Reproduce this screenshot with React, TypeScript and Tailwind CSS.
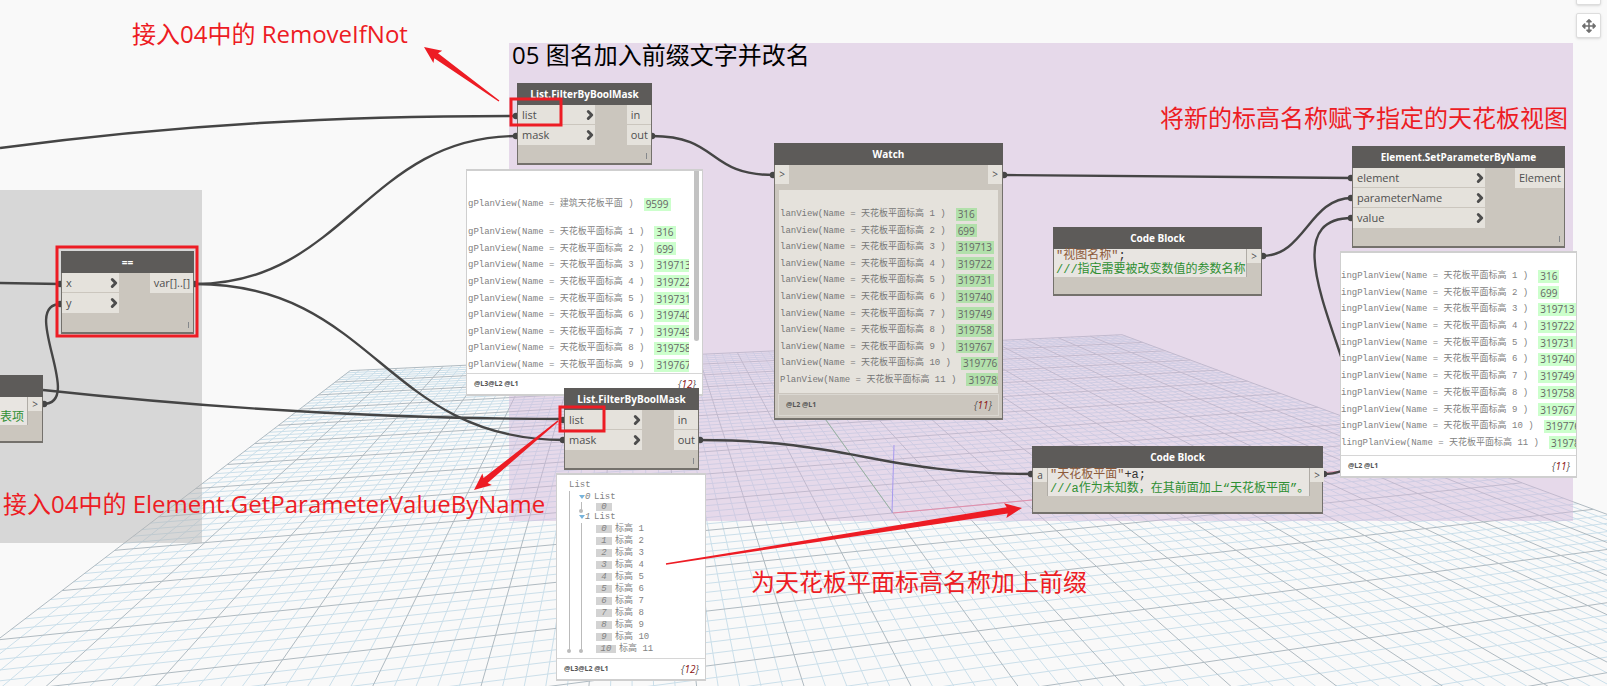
import { ChevronRight } from "lucide-react";
import { FaArrowsAlt } from "react-icons/fa";
import clsx from "clsx";
import type { ReactNode } from "react";

type Point = [number, number];

type WatchItem = { text: string; id: string };

// Ground plane: centre and the vanishing points of its two axes
const ORIGIN: Point = [893, 513];
const VANISH_X: Point = [4470, 179];
const VANISH_Y: Point = [634, 154];
const SCALE_X = 0.1885;
const SCALE_Y = 0.824;

const project = (s: number, t: number) => {
  const a = SCALE_X * s;
  const b = SCALE_Y * t;
  const w = 1 + a + b;
  const x = (ORIGIN[0] + a * VANISH_X[0] + b * VANISH_Y[0]) / w;
  const y = (ORIGIN[1] + a * VANISH_X[1] + b * VANISH_Y[1]) / w;
  return `${x.toFixed(1)} ${y.toFixed(1)}`;
};

const gridPath = (major: boolean) => {
  let d = "";
  for (let i = -50; i <= 50; i++) {
    if ((i % 5 === 0) !== major) continue;
    const v = i / 50;
    d += `M${project(v, 1)}L${project(v, -0.6)}`;
    if (v >= -0.6) d += `M${project(-1, v)}L${project(1, v)}`;
  }
  return d;
};

const wires = [
  "M0 148C180 124 340 116 517 116",
  "M195 284C345 284 367 136 517 136",
  "M195 284C375 284 384 440 564 440",
  "M0 283L61 284",
  "M43 404C86 404 18 304 61 304",
  "M43 390C200 407 380 419 564 419",
  "M652 136C720 136 706 175 774 175",
  "M1003 175L1352 178",
  "M1262 256C1305 256 1309 198 1352 198",
  "M1323 474C1440 474 1235 218 1352 218",
  "M699 440C850 440 880 474 1032 474",
];

const portDots: Point[] = [
  [516, 116], [516, 136], [652, 136], [60, 284], [60, 304], [195, 284],
  [44, 404], [563, 420], [563, 440], [700, 440], [773, 175], [1004, 175],
  [1351, 178], [1351, 198], [1351, 218], [1263, 256], [1031, 474], [1324, 474],
];

const arrowPoints = ([x1, y1]: Point, [x2, y2]: Point) => {
  const len = Math.hypot(x2 - x1, y2 - y1);
  const ux = (x2 - x1) / len;
  const uy = (y2 - y1) / len;
  const at = (back: number, side: number) =>
    `${x2 - ux * back - uy * side},${y2 - uy * back + ux * side}`;
  return [
    at(len, 0.7), at(15, 3.2), at(17, 7.5), at(0, 0),
    at(17, -7.5), at(15, -3.2), at(len, -0.7),
  ].join(" ");
};

const levelIds = ["316", "699", "319713", "319722", "319731", "319740", "319749", "319758", "319767", "319776", "319785"];

const levelItems = (prefix: string, count = 11): WatchItem[] =>
  levelIds.slice(0, count).map((id, i) => ({
    text: `${i === 10 ? prefix : prefix.slice(1)}(Name = 天花板平面标高 ${i + 1} )`,
    id,
  }));

function Ground() {
  return (
    <svg className="absolute top-0 left-0 h-full w-full" fill="none" aria-hidden="true">
      <path d={gridPath(false)} stroke="#cbdfea" strokeWidth="1" />
      <path d={gridPath(true)} stroke="#afbac1" strokeWidth="1" />
      <path d={`M${project(0, 0)}L${project(0, 1)}`} stroke="#5fae6a" />
      <path d={`M${project(0, 0)}L${project(1, 0)}`} stroke="#f4627a" />
      <path d="M892 513L894 445" stroke="#7a78ff" />
    </svg>
  );
}

function Wires() {
  return (
    <svg className="absolute top-0 left-0 h-full w-full" fill="none" aria-hidden="true">
      {wires.map((d) => (
        <path key={d} d={d} stroke="#454545" strokeWidth="2.4" />
      ))}
      {portDots.map(([x, y]) => (
        <circle key={`${x}-${y}`} cx={x} cy={y} r="3.2" fill="#454545" />
      ))}
    </svg>
  );
}

function Node({ title, className, children }: { title: string; className: string; children: ReactNode }) {
  return (
    <section className={clsx("absolute flex flex-col border border-t-0 border-b-2 border-[#74716c] bg-[#cbc6be]", className)}>
      <h2 className="-mx-px flex h-[22px] shrink-0 items-center justify-center bg-[#5d5b59] pt-px text-[10px] font-bold text-white">
        {title}
      </h2>
      {children}
    </section>
  );
}

function Ports({ inputs, outputs, inputClass }: { inputs: string[]; outputs: string[]; inputClass: string }) {
  return (
    <div className="flex grow items-start justify-between text-[11px] leading-4 text-[#4f4f4f]">
      <ul className={clsx("divide-y divide-[#cbc6be]", inputClass)}>
        {inputs.map((name) => (
          <li key={name} className="flex h-5 items-center justify-between bg-[#e5e2dc] pl-1">
            {name}
            <ChevronRight size={14} strokeWidth={5} className="-mr-0.5 text-[#4d4d4d]" />
          </li>
        ))}
      </ul>
      <ul className="divide-y divide-[#cbc6be]">
        {outputs.map((name) => (
          <li key={name} className="flex h-5 items-center bg-[#e5e2dc] pr-[3px] pl-1">
            {name}
          </li>
        ))}
      </ul>
    </div>
  );
}

function Lacing() {
  return <span className="mr-1 mb-1 h-1.5 w-px self-end bg-[#85888c]" />;
}

function FilterNode({ className }: { className: string }) {
  return (
    <Node title="List.FilterByBoolMask" className={clsx("h-[82px] w-[135px]", className)}>
      <Ports inputs={["list", "mask"]} outputs={["in", "out"]} inputClass="w-[77px]" />
      <Lacing />
    </Node>
  );
}

function Port({ label }: { label: string }) {
  return (
    <span className="flex h-[14px] w-[14px] shrink-0 items-center justify-center bg-[#e5e2dc] text-[10px] text-[#4f4f4f]">
      {label}
    </span>
  );
}

function CodeBlock({ input, text, rest, comment, className }: {
  input?: string;
  text: string;
  rest: string;
  comment: string;
  className: string;
}) {
  return (
    <Node title="Code Block" className={className}>
      <div className="flex items-start">
        {input && <Port label={input} />}
        <pre className={clsx(
          "h-7 grow border-r border-[#b0aca6] bg-[#e8e5e1] pl-0.5 font-['Liberation_Mono','Noto_Sans_CJK_SC',monospace] text-[12px] leading-[14px]",
          input && "border-l",
        )}>
          <span className="text-[#8d5a3a]">{text}</span>
          <span className="text-[#333]">{rest}</span>
          {"\n"}
          <span className="text-[#2f8f33]">{comment}</span>
        </pre>
        <Port label=">" />
      </div>
    </Node>
  );
}

function WatchRow({ item, chipClass }: { item: WatchItem; chipClass: string }) {
  return (
    <li className="flex h-[14px] shrink-0 items-center gap-2.5 font-['Liberation_Mono','Noto_Sans_CJK_SC',monospace] text-[9px] leading-[14px] whitespace-pre">
      <span className="shrink-0">{item.text}</span>
      <span className={clsx("flex h-[13px] shrink-0 items-center px-0.5 font-['Open_Sans',sans-serif] text-[10px] leading-3 text-[#666]", chipClass)}>
        {item.id}
      </span>
    </li>
  );
}

function WatchFooter({ levels, count, className }: { levels: string; count: number; className: string }) {
  return (
    <div className={clsx("flex shrink-0 items-center justify-between pr-1.5 pl-[7px] text-[#555]", className)}>
      <span className="text-[7px] font-bold whitespace-pre">{levels}</span>
      <span className="text-[10px] italic">
        {"{"}
        <span className="text-[#8b1212]">{count}</span>
        {"}"}
      </span>
    </div>
  );
}

const panelClass = "absolute flex flex-col border-2 border-x-1 border-[#cfcfcf] bg-white text-[#828282]";

function PlanViewPanel() {
  return (
    <div className={clsx(panelClass, "top-[169px] left-[466px] h-[227px] w-[237px]")}>
      <div className="flex min-h-0 grow">
        <div className="flex w-[222px] flex-col overflow-hidden pt-[26px] pl-px">
          <ul>
            <WatchRow item={{ text: "gPlanView(Name = 建筑天花板平面 )", id: "9599" }} chipClass="bg-[#ccffcc]" />
          </ul>
          <ul className="mt-[14px] flex grow flex-col justify-between pb-px">
            {levelItems("ngPlanView", 9).map((item) => (
              <WatchRow key={item.id} item={item} chipClass="bg-[#ccffcc]" />
            ))}
          </ul>
        </div>
        <div className="ml-[5px] h-[170px] w-[5px] rounded-b bg-[#c2c2c2]" />
      </div>
      <WatchFooter levels="@L3@L2 @L1" count={12} className="h-[21px] border-t border-[#d6d6d6]" />
    </div>
  );
}

function ResultPanel() {
  return (
    <div className={clsx(panelClass, "top-[251px] left-[1340px] h-[227px] w-[237px]")}>
      <ul className="flex min-h-0 grow flex-col justify-between overflow-hidden pt-4 pb-[5px]">
        {levelItems("lingPlanView").map((item) => (
          <WatchRow key={item.id} item={item} chipClass="bg-[#ccffcc]" />
        ))}
      </ul>
      <WatchFooter levels="@L2 @L1" count={11} className="h-[21px] border-t border-[#d6d6d6]" />
    </div>
  );
}

function WatchNode() {
  return (
    <Node title="Watch" className="top-[143px] left-[774px] h-[277px] w-[229px]">
      <div className="flex h-[25px] justify-between">
        <span className="flex h-[19px] w-[14px] items-center justify-center bg-[#e5e2dc] text-[10px] text-[#4f4f4f]">&gt;</span>
        <span className="flex h-[19px] w-[14px] items-center justify-center bg-[#e5e2dc] text-[10px] text-[#4f4f4f]">&gt;</span>
      </div>
      <ul className="mx-1 flex h-[203px] flex-col justify-between overflow-hidden bg-[#e5e2dc] pt-[17px] pb-1.5 pl-px text-[#777]">
        {levelItems("PlanView").map((item) => (
          <WatchRow key={item.id} item={item} chipClass="bg-[#b2e0ab]" />
        ))}
      </ul>
      <WatchFooter levels="@L2 @L1" count={11} className="mx-[3px] mt-px h-[22px] border border-[#dad7d1]" />
    </Node>
  );
}

function Expander({ index }: { index: number }) {
  return (
    <li className="flex h-3 items-center pl-[22px]">
      <button type="button" aria-label={`Collapse list ${index}`} className="flex">
        <svg width="6" height="4" viewBox="0 0 6 4"><path d="M0 0H6L3 4Z" fill="#77b4dc" /></svg>
      </button>
      <span className="w-[9px] italic">{index}</span>
      List
    </li>
  );
}

function TreeRow({ index, label }: { index: number; label?: string }) {
  return (
    <li className="flex h-3 items-center gap-[3px] pl-[39px]">
      <span className={clsx("h-2 bg-[#d3d3d3] text-center leading-2 italic", index > 9 ? "w-5" : "w-4")}>{index}</span>
      {label}
    </li>
  );
}

function TreePanel() {
  return (
    <div className={clsx(panelClass, "top-[473px] left-[556px] h-[208px] w-[150px]")}>
      <div className="relative grow pt-1">
        <span className="absolute top-[16px] left-3 h-[160px] w-px bg-[#bbb]" />
        <span className="absolute top-[27px] left-6 h-2.5 w-px bg-[#bbb]" />
        <span className="absolute top-[48px] left-6 h-32 w-px bg-[#bbb]" />
        <span className="absolute top-[34px] left-[22px] size-1 rounded-full bg-[#bbb]" />
        <span className="absolute top-[174px] left-[10px] size-1 rounded-full bg-[#bbb]" />
        <span className="absolute top-[174px] left-[22px] size-1 rounded-full bg-[#bbb]" />
        <ul className="flex h-[174px] flex-col justify-between font-['Liberation_Mono','Noto_Sans_CJK_SC',monospace] text-[9px] leading-3">
          <li className="h-3 pl-3">List</li>
          <Expander index={0} />
          <TreeRow index={0} />
          <Expander index={1} />
          {levelIds.map((id, i) => (
            <TreeRow key={id} index={i} label={`标高 ${i + 1}`} />
          ))}
        </ul>
      </div>
      <WatchFooter levels="@L3@L2 @L1" count={12} className="h-[21px] border-t border-[#d6d6d6]" />
    </div>
  );
}

function Note({ className, children }: { className: string; children: ReactNode }) {
  return (
    <p className={clsx("absolute text-[24px] leading-8 whitespace-nowrap text-[#ed1c24]", className)}>{children}</p>
  );
}

function Markup() {
  return (
    <svg className="pointer-events-none absolute top-0 left-0 h-full w-full" fill="none" aria-hidden="true">
      <g stroke="#ed1c24" strokeWidth="3">
        <rect x="511" y="99" width="50" height="26" />
        <rect x="57" y="247" width="140" height="89" />
        <rect x="560" y="407" width="44" height="24" />
      </g>
      <g fill="#ed1c24">
        <polygon points={arrowPoints([499, 101], [424, 47])} />
        <polygon points={arrowPoints([558, 421], [474, 490])} />
        <polygon points={arrowPoints([666, 564], [1022, 508])} />
      </g>
    </svg>
  );
}

export default function App() {
  return (
    <main className="relative h-screen w-full overflow-hidden bg-[#f9f9f9] font-['Open_Sans','Noto_Sans_CJK_SC',sans-serif]">
      <Ground />

      <div className="absolute top-[190px] left-0 h-[353px] w-[202px] bg-[#b5b5b5]/50" />
      <div className="absolute top-[43px] left-[509px] h-[478px] w-[1064px] bg-[#d3b9db]/50 pl-[3px]">
        <h1 className="text-[24px] leading-6 text-black">05 图名加入前缀文字并改名</h1>
      </div>

      <Wires />

      <Node title="==" className="top-[251px] left-[61px] h-[83px] w-[133px]">
        <Ports inputs={["x", "y"]} outputs={["var[]..[]"]} inputClass="w-[57px]" />
        <Lacing />
      </Node>
      <section className="absolute top-[375px] left-0 flex h-[68px] w-[43px] flex-col border-r border-b-2 border-[#74716c] bg-[#cbc6be]">
        <div className="-mr-px h-[22px] bg-[#5d5b59]" />
        <div className="flex items-start">
          <pre className="h-7 w-7 border-r border-[#b0aca6] bg-[#e8e5e1] font-['Liberation_Mono','Noto_Sans_CJK_SC',monospace] text-[12px] leading-[14px] text-[#2f8f33]">
            {"\n表项"}
          </pre>
          <Port label=">" />
        </div>
      </section>

      <FilterNode className="top-[83px] left-[517px]" />
      <PlanViewPanel />
      <FilterNode className="top-[388px] left-[564px]" />
      <TreePanel />
      <WatchNode />

      <CodeBlock
        text={'"视图名称"'}
        rest=";"
        comment="///指定需要被改变数值的参数名称"
        className="top-[227px] left-[1053px] h-[69px] w-[209px]"
      />
      <CodeBlock
        input="a"
        text={'"天花板平面"'}
        rest="+a;"
        comment="///a作为未知数，在其前面加上“天花板平面”。"
        className="top-[446px] left-[1032px] h-[68px] w-[291px]"
      />

      <Node title="Element.SetParameterByName" className="top-[146px] left-[1352px] h-[102px] w-[213px]">
        <Ports inputs={["element", "parameterName", "value"]} outputs={["Element"]} inputClass="w-[132px]" />
        <Lacing />
      </Node>
      <ResultPanel />

      <Markup />
      <Note className="top-[18px] left-[132px]">接入04中的 RemoveIfNot</Note>
      <Note className="top-[488px] left-[3px]">接入04中的 Element.GetParameterValueByName</Note>
      <Note className="top-[566px] left-[751px]">为天花板平面标高名称加上前缀</Note>
      <Note className="top-[102px] left-[1160px]">将新的标高名称赋予指定的天花板视图</Note>

      <div className="absolute -top-5 right-1.5 flex flex-col gap-2">
        <button type="button" aria-label="Zoom out" className="size-[25px] rounded-xs border border-[#ddd] bg-white shadow-sm" />
        <button type="button" aria-label="Pan" className="flex size-[25px] items-center justify-center rounded-xs border border-[#ddd] bg-white text-[#6f6f6f] shadow-sm">
          <FaArrowsAlt size={14} />
        </button>
      </div>
    </main>
  );
}
